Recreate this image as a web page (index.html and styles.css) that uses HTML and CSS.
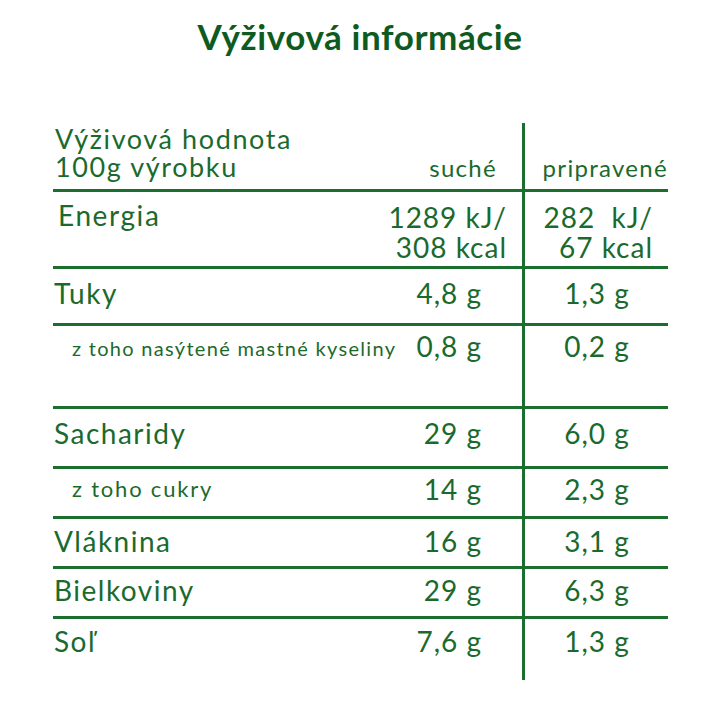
FILE: index.html
```html
<!DOCTYPE html>
<html lang="sk">
<head>
<meta charset="utf-8">
<title>Výživová informácie</title>
<link rel="stylesheet" href="styles.css">
</head>
<body>
<h1 class="title">Výživová informácie</h1>
<div class="table">
  <div class="row row-head">
    <div class="label head-label">Výživová hodnota<br>100g výrobku</div>
    <div class="mid head-mid">suché</div>
    <div class="right head-right">pripravené</div>
  </div>
  <div class="row row-energy">
    <div class="label energy-label">Energia</div>
    <div class="mid energy-val">1289 kJ/<br>308 kcal</div>
    <div class="right energy-val-r">282&nbsp; kJ/<br>67 kcal</div>
  </div>
  <div class="row row-tuky">
    <div class="label">Tuky</div>
    <div class="mid val">4,8 g</div>
    <div class="right val">1,3 g</div>
  </div>
  <div class="row row-sat">
    <div class="label sub">z toho nasýtené mastné kyseliny</div>
    <div class="mid val">0,8 g</div>
    <div class="right val">0,2 g</div>
  </div>
  <div class="row row-sach">
    <div class="label">Sacharidy</div>
    <div class="mid val">29 g</div>
    <div class="right val">6,0 g</div>
  </div>
  <div class="row row-cukry">
    <div class="label sub sub-big">z toho cukry</div>
    <div class="mid val">14 g</div>
    <div class="right val">2,3 g</div>
  </div>
  <div class="row row-vlak">
    <div class="label">Vláknina</div>
    <div class="mid val">16 g</div>
    <div class="right val">3,1 g</div>
  </div>
  <div class="row row-biel">
    <div class="label">Bielkoviny</div>
    <div class="mid val">29 g</div>
    <div class="right val">6,3 g</div>
  </div>
  <div class="row row-sol last">
    <div class="label">Soľ</div>
    <div class="mid val">7,6 g</div>
    <div class="right val">1,3 g</div>
  </div>
</div>
</body>
</html>
```
FILE: styles.css
```css
html, body {
  margin: 0;
  padding: 0;
  background: #ffffff;
}
body {
  font-family: Lato, "Open Sans", sans-serif;
  color: #1b6a2d;
}
.title {
  margin: 0;
  padding-top: 15px;
  height: 123px;
  box-sizing: border-box;
  text-align: center;
  font-size: 35px;
  line-height: 1.2;
  font-weight: 700;
  letter-spacing: 0.6px;
  color: #0d5b21;
}
.table {
  margin-left: 53px;
  width: 615px;
}
.row {
  display: grid;
  grid-template-columns: 469px 1fr;
  grid-template-rows: 1fr;
  border-bottom: 3px solid #1b6e2e;
  box-sizing: border-box;
}
.row.last {
  border-bottom: none;
}
.row > div {
  font-size: 28px;
  line-height: 1.2;
  box-sizing: border-box;
  letter-spacing: 1px;
}
.label {
  grid-column: 1;
  grid-row: 1;
  padding-left: 1px;
  white-space: nowrap;
}
.row > .label {
  letter-spacing: 1.5px;
}
.mid {
  grid-column: 1;
  grid-row: 1;
  justify-self: end;
  text-align: right;
  padding-right: 40px;
}
.right {
  grid-column: 2;
  grid-row: 1;
  border-left: 3px solid #1b6e2e;
  text-align: center;
  padding-left: 1px;
}

/* header */
.row-head { height: 69px; }
.row > .head-label {
  font-size: 27px;
  line-height: 28px;
  padding-top: 2px;
  padding-left: 2px;
  letter-spacing: 1.6px;
}
.row > .head-mid, .row > .head-right {
  font-size: 24px;
  line-height: 26px;
  padding-top: 32px;
  letter-spacing: 1.3px;
}
.row > .head-mid { padding-right: 25px; }
.row > .head-right { text-align: right; padding-right: 0; }

/* energy */
.row-energy { height: 77px; }
.row > .energy-label {
  font-size: 28px;
  padding-top: 7px;
  padding-left: 5px;
  letter-spacing: 1.6px;
}
.row > .energy-val, .row > .energy-val-r {
  line-height: 30px;
  padding-top: 10px;
}
.row > .energy-val { padding-right: 15px; }
.row > .energy-val-r { text-align: right; padding-right: 15px; }

.row > .sub {
  font-size: 20px;
  padding-left: 19px;
  letter-spacing: 1.3px;
}
.row > .sub-big {
  font-size: 22px;
  letter-spacing: 1.8px;
}

.row-tuky { height: 57px; }
.row-tuky > div { padding-top: 8px; }
.row-sat { height: 83px; }
.row-sat > .sub { padding-top: 10px; }
.row-sat > .val { padding-top: 4px; }
.row-sach { height: 60px; }
.row-sach > div { padding-top: 8px; }
.row-cukry { height: 50px; }
.row-cukry > .sub { padding-top: 7px; }
.row-cukry > .val { padding-top: 4px; }
.row-vlak { height: 50px; }
.row-vlak > div { padding-top: 6px; }
.row-biel { height: 50px; }
.row-biel > div { padding-top: 5px; }
.row-sol { height: 61px; }
.row-sol > div { padding-top: 6px; }
```
